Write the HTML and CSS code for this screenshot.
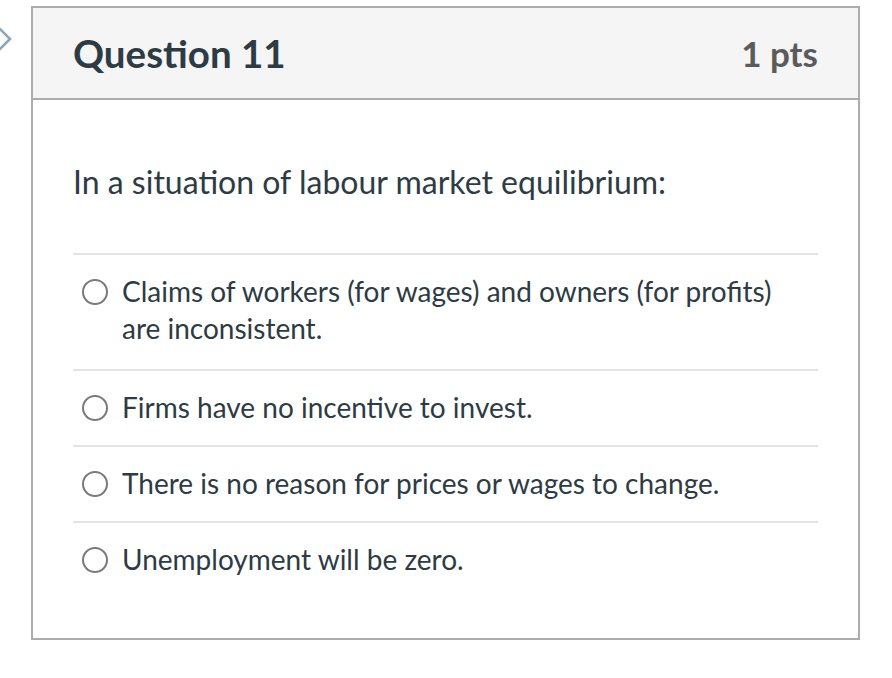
FILE: index.html
```
<!DOCTYPE html>
<html>
<head>
<meta charset="utf-8">
<link rel="stylesheet" href="styles.css">
</head>
<body>
<div class="page">
  <div class="chev">
    <svg width="16" height="28" viewBox="0 0 16 28"><path d="M1 3 L12 14 L1 25" fill="none" stroke="#8ea5b9" stroke-width="2.6"/></svg>
  </div>
  <div class="card">
    <div class="header">
      <span class="title">Question 11</span>
      <span class="pts">1 pts</span>
    </div>
    <div class="body">
      <p class="q">In a situation of labour market equilibrium:</p>
      <div class="answers">
        <div class="ans"><span class="radio"></span><span class="txt">Claims of workers (for wages) and owners (for profits) are inconsistent.</span></div>
        <div class="ans"><span class="radio"></span><span class="txt">Firms have no incentive to invest.</span></div>
        <div class="ans"><span class="radio"></span><span class="txt">There is no reason for prices or wages to change.</span></div>
        <div class="ans"><span class="radio"></span><span class="txt">Unemployment will be zero.</span></div>
      </div>
    </div>
  </div>
</div>
</body>
</html>
```
FILE: styles.css
```
* { box-sizing: border-box; }
html, body { margin: 0; padding: 0; background: #fff; }
body { font-family: Lato, "Noto Sans", sans-serif; color: #2d3b45; }
.page { position: relative; padding: 6px 0 0 31px; width: 892px; height: 678px; }
.chev { position: absolute; left: -2px; top: 25px; }
.card { width: 829px; border: 2px solid #acacac; }
.header { height: 92px; background: #f5f5f5; border-bottom: 2px solid #acacac; display: flex; align-items: center; justify-content: space-between; padding: 0 40px 0 40px; }
.title { font-size: 38.5px; font-weight: 700; color: #2d3b45; }
.pts { font-size: 35px; font-weight: 700; color: #5b5b5b; }
.body { padding: 63px 40px 41px 40px; }
.q { margin: 0 0 52px 0; font-size: 32px; line-height: 38px; }
.ans { border-top: 2px solid #e2e2e2; display: flex; align-items: flex-start; padding: 18px 0 19px 9px; }
.ans:first-child { padding-bottom: 22px; }
.radio { flex: none; width: 26px; height: 26px; border: 2px solid #7a7a7a; border-radius: 50%; margin-top: 6px; margin-right: 14px; }
.txt { font-size: 28px; line-height: 37px; max-width: 680px; }
```
